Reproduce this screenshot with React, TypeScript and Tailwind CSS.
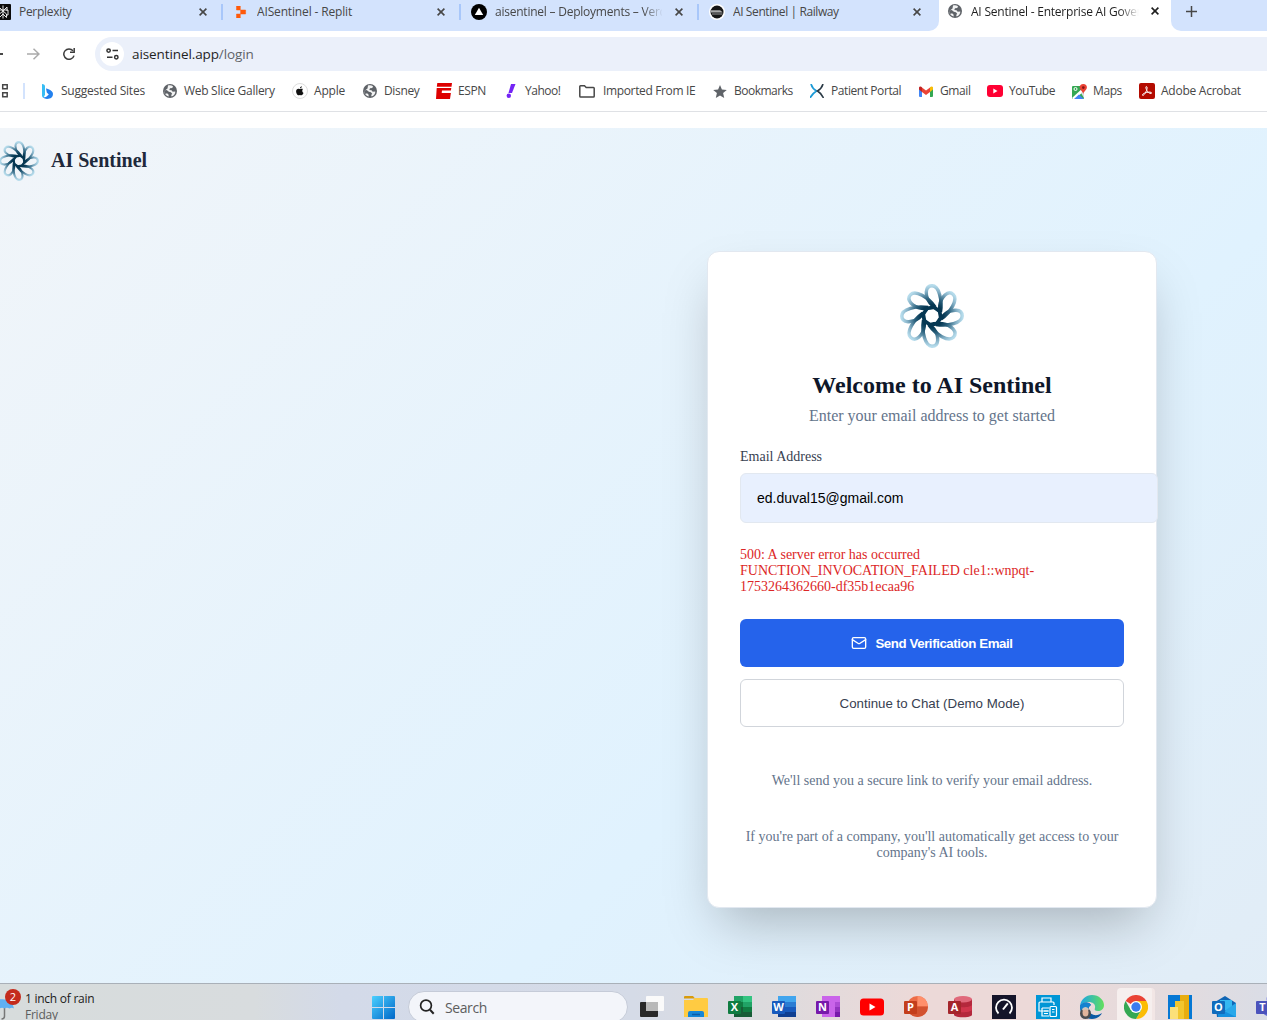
import React from "react";

type P = { children?: React.ReactNode };

function Petals({ id, size }: { id: string; size: number }) {
  const turns = [0, 45, 90, 135, 180, 225, 270, 315];
  return (
    <svg width={size} height={size} viewBox="-32 -32 64 64" className="block shrink-0">
      <defs>
        <radialGradient id={id} gradientUnits="userSpaceOnUse" cx="0" cy="0" r="32">
          <stop offset="0.35" stopColor="#053752" />
          <stop offset="0.55" stopColor="#2b617d" />
          <stop offset="0.78" stopColor="#84b0c6" />
          <stop offset="0.95" stopColor="#b5dbeb" />
        </radialGradient>
      </defs>
      <g fill="none" stroke={`url(#${id})`} strokeWidth="3.4">
        {turns.map((t) => (
          <path key={t} transform={`rotate(${t})`} d="M8.500-4C10.500-16 7-30.200 0-30.200C-7.500-30.200-7-19.500-2-13C1-9 5-6 8.500-4" />
        ))}
        <circle r="8.8" strokeWidth="3" />
      </g>
    </svg>
  );
}

function Globe({ s = 14 }: { s?: number }) {
  return (
    <svg width={s} height={s} viewBox="0 0 14 14" className="block">
      <circle cx="7" cy="7" r="7" fill="#5f6368" />
      <path d="M5 1.6c1.600-.5 3.700-.3 5 .6L9.300 4 7 4.300 6.300 6l2.200.3 1.200 1.400 2.600-.3c.2 2-1.300 4.300-3.700 5l-.4-1.500 1-1.200-1.300-1.500-2-.4L3.700 6 1.500 6.600c-.2 1 .3 2.600 1 3.500L4 9.300l1.500 1.200.2 1.900C3 12 1.300 9.600 1.300 7L4.500 4.500z" fill="#fff" opacity=".92" />
    </svg>
  );
}

function Close({ dark }: { dark?: boolean }) {
  return (
    <svg width="8" height="8" viewBox="0 0 8 8" className="block">
      <path d="M.6.6l6.800 6.800M7.400.6L.6 7.400" stroke={dark ? "#1f1f1f" : "#474747"} strokeWidth="1.6" />
    </svg>
  );
}

function Tab({ icon, title, cls, last }: { icon: React.ReactNode; title: string; cls: string; last?: boolean }) {
  return (
    <div className="flex h-6 w-[238px] shrink-0 items-center">
      <div className="flex w-4 shrink-0 justify-center">{icon}</div>
      <div className={"ml-2 w-[167px] shrink-0 overflow-hidden whitespace-nowrap text-[12px] leading-6 text-[#474747] " + cls}>{title}</div>
      <div className="ml-[13px] w-2"><Close /></div>
      {!last && <div className="ml-[14px] h-4 w-[2px] bg-[#a8c7fa]" />}
    </div>
  );
}

function Mark({ icon, w, cls, children }: P & { icon: React.ReactNode; w: string; cls: string }) {
  return (
    <div className={"flex shrink-0 items-center " + w}>
      <div className="flex w-4 shrink-0 justify-center">{icon}</div>
      <span className={"ml-[6px] whitespace-nowrap " + cls}>{children}</span>
    </div>
  );
}

function Office({ letter, tile, children }: P & { letter: string; tile: string }) {
  return (
    <svg width="24" height="24" viewBox="0 0 24 24" className="block shrink-0">
      {children}
      <rect x="0" y="6" width="13" height="13" rx="1" fill={tile} />
      <text x="6.500" y="16.300" textAnchor="middle" fontFamily="Open Sans, sans-serif" fontWeight="700" fontSize="11" fill="#fff">{letter}</text>
    </svg>
  );
}

function Slot({ children }: P) {
  return <div className="flex w-11 shrink-0 justify-center">{children}</div>;
}

function TabStrip() {
  return (
    <div className="flex h-[31px] w-[1267px] bg-white">
      <div className="flex h-[31px] w-[939px] shrink-0 overflow-hidden rounded-br-[10px] bg-[#d3e3fd]">
        <div className="-ml-[5px] flex h-6 shrink-0">
          <Tab cls="tracking-[-0.3px]" title="Perplexity" icon={
            <svg width="16" height="16" viewBox="0 0 16 16"><rect width="16" height="16" rx="1" fill="#0b0b0b" /><path d="M8 1.500v13M4 3l4 4 4-4v4M4 3v4M3 6h10v5h-1.500M3 6v5h1.500M8 7l-3.500 3v3.500L8 10M8 7l3.500 3v3.500L8 10" fill="none" stroke="#e6e6e6" strokeWidth="1" /></svg>} />
          <Tab cls="tracking-[-0.15px]" title="AISentinel - Replit" icon={
            <svg width="12" height="12" viewBox="0 0 12 12"><path d="M1.500 0h3.800v4H1.500zM5.600 4h5v4h-5zM1.500 8h3.800v4H1.500z" fill="#ff5a0a" stroke="#ff5a0a" strokeLinejoin="round" strokeWidth=".5" /></svg>} />
          <Tab cls="tracking-[-0.23px] [mask-image:linear-gradient(to_right,#000_148px,transparent_168px)]" title="aisentinel – Deployments – Vercel" icon={
            <svg width="16" height="16" viewBox="0 0 16 16"><circle cx="8" cy="8" r="8" fill="#000" /><path d="M8 3.800l4.200 7.200H3.800z" fill="#fff" /></svg>} />
          <Tab last cls="tracking-[-0.4px]" title="AI Sentinel | Railway" icon={
            <svg width="16" height="16" viewBox="0 0 16 16"><circle cx="8" cy="8" r="8" fill="#fff" /><circle cx="8" cy="8" r="6.500" fill="#161616" /><path d="M2 6.200h8.500c1.500.3 2.500 1.300 3 2.300H2z" fill="#aaa" /><path d="M3 10h10.500" stroke="#999" /></svg>} />
        </div>
      </div>
      <div className="flex w-[232px] shrink-0">
        <div className="ml-[9px] mt-1 h-[14px]"><Globe /></div>
        <div className="ml-[9px] h-6 w-[168px] overflow-hidden whitespace-nowrap text-[12px] leading-6 tracking-[-0.22px] text-[#1f1f1f] [mask-image:linear-gradient(to_right,#000_148px,transparent_168px)]">AI Sentinel - Enterprise AI Governance</div>
        <div className="ml-3 mt-[7px] h-2"><Close dark /></div>
      </div>
      <div className="h-[31px] flex-1 rounded-bl-[10px] bg-[#d3e3fd] pl-[15px] pt-[6px]">
        <svg width="11" height="11" viewBox="0 0 11 11"><path d="M5.500 0v11M0 5.500h11" stroke="#474747" strokeWidth="1.500" /></svg>
      </div>
    </div>
  );
}

function Toolbar() {
  return (
    <div className="flex h-[40px] pt-[6px]">
      <div className="flex h-[34px] w-[95px] shrink-0 items-center">
        <div className="h-[2px] w-[3px] bg-[#474747]" />
        <svg className="ml-6" width="13" height="12" viewBox="0 0 13 12"><path d="M0 6h11.500M6.500.7L12 6l-5.500 5.300" fill="none" stroke="#ababab" strokeWidth="1.500" /></svg>
        <svg className="ml-[23px]" width="12" height="12" viewBox="0 0 12 12"><path d="M11 7.600A5.200 5.200 0 1 1 10 2.800" fill="none" stroke="#3c3c3c" strokeWidth="1.500" /><path d="M11.200 0v4.200H7" fill="none" stroke="#3c3c3c" strokeWidth="1.500" /></svg>
      </div>
      <div className="flex h-[34px] flex-1 items-center rounded-l-full bg-[#ebf0fa] pl-[5px]">
        <div className="flex h-6 w-6 items-center justify-center rounded-full bg-white">
          <svg width="13" height="12" viewBox="0 0 13 12"><g fill="none" stroke="#333" strokeWidth="1.500"><circle cx="2.600" cy="2.600" r="1.700" /><path d="M6.500 2.600h5.500M1 9.300h5.500" /><circle cx="10.300" cy="9.300" r="1.700" /></g></svg>
        </div>
        <span className="ml-2 text-[13.500px] tracking-[-0.1px] text-[#1f1f1f]">aisentinel.app<span className="text-[#5f6368]">/login</span></span>
      </div>
    </div>
  );
}

function Bookmarks() {
  return (
    <div className="flex h-[41px] items-center border-b border-[#dfe1e5] text-[12px] leading-4 text-[#474747]">
      <svg width="8" height="14" viewBox="0 0 8 14" className="shrink-0"><path d="M2.700.8h4.500v4H2.700zM2.700 8.800h4.500v4H2.700z" fill="none" stroke="#474747" strokeWidth="1.500" /></svg>
      <div className="ml-[15px] mr-[14px] h-4 w-[2px] shrink-0 bg-[#d3e3fd]" />
      <Mark w="w-[123px]" cls="tracking-[-0.22px]" icon={<svg width="11" height="15" viewBox="0 0 11 15"><path d="M0 0q3 .3 3 2.500v8L1.500 14Q0 13 0 11.500z" fill="#37bdf4" /><path d="M4 4.500q.8-.3 2 .4 5 2 5 5 0 4-4.500 4.900Q3 15.300 1 13.600q3.500-.2 5.800-3.200L4.800 8.500z" fill="#2381ee" /></svg>}>Suggested Sites</Mark>
      <Mark w="w-[130px]" cls="tracking-[-0.29px]" icon={<Globe />}>Web Slice Gallery</Mark>
      <Mark w="w-[70px]" cls="tracking-[-0.2px]" icon={<svg width="16" height="16" viewBox="0 0 16 16"><circle cx="8" cy="8" r="7.500" fill="#fff" stroke="#ddd" /><path d="M10.900 6.100c-.7-.4-1.500-.5-2.400 0-.3.100-.6.100-.9 0-1.800-.9-3.500.3-3.500 2.300 0 1.600 1.200 3.900 2.300 3.900.6 0 .8-.3 1.500-.3s.9.300 1.500.3c.9 0 1.700-1.300 2.100-2.300-1.300-.6-1.700-2.700-.6-3.900zM8 5.300c0-1.100.8-2 1.800-2.100C9.900 4.300 9 5.300 8 5.300z" fill="#111" /></svg>}>Apple</Mark>
      <Mark w="w-[74px]" cls="tracking-[-0.35px]" icon={<Globe />}>Disney</Mark>
      <Mark w="w-[67px]" cls="tracking-[-0.4px]" icon={<svg width="16" height="16" viewBox="0 0 16 16"><path d="M1.300 0H16l-.5 3.800H.8zM.7 4.900h14.600l-.4 2.600H6L5.700 10h9.200L14 16H0z" fill="#d00" /></svg>}>ESPN</Mark>
      <Mark w="w-[78px]" cls="tracking-[-0.5px]" icon={<svg width="10" height="14" viewBox="0 0 10 14"><path d="M5 0h4.500L6 9H2.500z" fill="#7424f5" /><circle cx="2.800" cy="11.800" r="2.200" fill="#7424f5" /></svg>}>Yahoo!</Mark>
      <Mark w="w-[131px]" cls="tracking-[-0.36px]" icon={<svg width="16" height="13" viewBox="0 0 16 13" className="-ml-1 shrink-0"><path d="M.8 1.500q0-.7.700-.7h4L7.200 2.500h7.200q.8 0 .8.800v8q0 .8-.8.800H1.600q-.8 0-.8-.8z" fill="none" stroke="#474747" strokeWidth="1.500" /></svg>}>Imported From IE</Mark>
      <Mark w="w-[97px]" cls="tracking-[-0.5px]" icon={<svg width="14" height="13" viewBox="0 0 14 13"><path d="M7 0l1.900 4.500 4.900.4-3.700 3.200 1.100 4.800L7 10.400l-4.200 2.500 1.100-4.800L.2 4.900l4.900-.4z" fill="#5f6368" /></svg>}>Bookmarks</Mark>
      <Mark w="w-[109px]" cls="tracking-[-0.42px]" icon={<svg width="14" height="14" viewBox="0 0 14 14"><path d="M1 0c1 3.500 3 5.500 5.500 7C4 8.500 2 10.500 0 14" fill="none" stroke="#1c9ad6" strokeWidth="1.700" /><path d="M13 0C12 3.500 10 5.500 7.500 7 10 8.500 12 10.500 13.500 14" fill="none" stroke="#2b3a46" strokeWidth="1.600" /></svg>}>Patient Portal</Mark>
      <Mark w="w-[69px]" cls="tracking-[-0.4px]" icon={<svg width="14" height="11" viewBox="0 0 14 11"><path d="M0 1.500h3V11H1q-1 0-1-1z" fill="#4285f4" /><path d="M11 1.500h3V10q0 1-1 1h-2z" fill="#34a853" /><path d="M11 1.500C12 0 14 .3 14 2v1.500L11 6z" fill="#fbbc04" /><path d="M0 2C0 .3 2 0 3 1.500V6L0 3.500z" fill="#c5221f" /><path d="M3 1.500l4 3 4-3V6L7 9 3 6z" fill="#ea4335" /></svg>}>Gmail</Mark>
      <Mark w="w-[84px]" cls="tracking-[-0.48px]" icon={<svg width="16" height="12" viewBox="0 0 16 12"><rect width="16" height="12" rx="3" fill="#f03" /><path d="M6.300 3.500v5l4.200-2.500z" fill="#fff" /></svg>}>YouTube</Mark>
      <Mark w="w-[68px]" cls="tracking-[-0.4px]" icon={<svg width="15" height="15" viewBox="0 0 15 15"><path d="M0 3q0-1 1-1h11v12q0 1-1 1H1q-1 0-1-1z" fill="#34a853" /><path d="M0 14L12 3v4L3 15H1z" fill="#fff" /><path d="M2 15l5-4.500L12 15z" fill="#4285f4" /><path d="M9 9l3-2v7z" fill="#dadce0" /><circle cx="3.500" cy="5" r="1.500" fill="none" stroke="#fff" /><path d="M11.300 0a3.600 3.600 0 0 1 3.600 3.600c0 2.400-2.800 3.400-3.600 6.400-.8-3-3.600-4-3.600-6.400A3.600 3.600 0 0 1 11.300 0z" fill="#ea4335" /><circle cx="11.300" cy="3.600" r="1.300" fill="#811411" /></svg>}>Maps</Mark>
      <Mark w="w-[110px]" cls="tracking-[-0.25px]" icon={<svg width="16" height="16" viewBox="0 0 16 16"><rect width="16" height="16" rx="2" fill="#b30b00" /><path d="M7.300 3.600c1.600 0 .6 3.600-.6 5.700s-2.600 3.700-3.200 3 1-2.100 3.800-2.800 5.300-.5 5.300.5-2.500.6-4-1.400-2.300-5-1.300-5z" fill="none" stroke="#fff" strokeWidth="1" /></svg>}>Adobe Acrobat</Mark>
    </div>
  );
}

function LoginPage() {
  return (
    <div className="h-[855px] w-[1864px] bg-[linear-gradient(135deg,#f1f5f9_0%,#e0f2fe_50%,#e2e8f0_100%)] pt-[13px] [font-family:'Liberation_Serif',serif]">
      <div className="-ml-[1px] flex h-10 items-center">
        <Petals id="markSmall" size={40} />
        <span className="ml-3 pb-px text-[20px] font-bold leading-[23px] text-[#1e293b]">AI Sentinel</span>
      </div>
      <div className="ml-[707px] mt-[70px] h-[657px] w-[450px] rounded-xl border border-[#e2e8f0] bg-white px-8 pt-8 shadow-[0_25px_50px_-12px_rgba(0,0,0,0.25)]">
        <div className="flex justify-center"><Petals id="markLarge" size={64} /></div>
        <h1 className="mt-[23px] text-center text-[24px] font-bold leading-7 text-[#0f172a]">Welcome to AI Sentinel</h1>
        <p className="mt-2 text-center text-[16px] leading-[18px] text-[#64748b]">Enter your email address to get started</p>
        <label className="mt-6 block text-[14px] leading-4 text-[#374151]">Email Address</label>
        <div className="mt-2 flex h-[50px] w-[418px] items-center rounded-md border border-[#e2e8f0] bg-[#e8f0fe] px-4 text-[14px] text-black [font-family:'Liberation_Sans',sans-serif]">ed.duval15@gmail.com</div>
        <p className="mt-6 text-[14px] leading-4 text-[#dc2626]">500: A server error has occurred<br />FUNCTION_INVOCATION_FAILED cle1::wnpqt-<br />1753264362660-df35b1ecaa96</p>
        <button className="mt-6 flex h-12 w-full items-center justify-center gap-2 rounded-md bg-[#2563eb] text-[13.300px] font-bold tracking-[-0.43px] text-white [font-family:'Liberation_Sans',sans-serif]">
          <svg width="16" height="16" viewBox="0 0 24 24" fill="none" stroke="#fff" strokeWidth="2" strokeLinecap="round" strokeLinejoin="round"><rect x="2" y="4" width="20" height="16" rx="2" /><path d="m22 7-8.970 5.700a1.940 1.940 0 0 1-2.060 0L2 7" /></svg>
          <span className="pt-[2px]">Send Verification Email</span>
        </button>
        <button className="mt-3 flex h-12 w-full items-center justify-center rounded-md border border-[#d1d5db] bg-white pt-[2px] text-[13.300px] text-[#374151] [font-family:'Liberation_Sans',sans-serif]">Continue to Chat (Demo Mode)</button>
        <p className="mt-[46px] text-center text-[14px] leading-4 text-[#64748b]">We'll send you a secure link to verify your email address.</p>
        <p className="mt-10 text-center text-[14px] leading-4 text-[#64748b]">If you're part of a company, you'll automatically get access to your<br />company's AI tools.</p>
      </div>
    </div>
  );
}

function Taskbar() {
  return (
    <div className="flex h-[37px] w-[1267px] overflow-hidden border-t border-[#a9b0b8] bg-[linear-gradient(to_right,#d7dcdc_0%,#d8dcde_20%,#d3dae9_27%,#d5dbe7_50%,#dcdbde_60%,#ecd9d8_72%,#ecd9d8_82%,#e4dbdd_92%,#dadde6_100%)]">
      <div className="flex w-[361px] shrink-0">
        <div className="relative h-9 w-[25px] shrink-0">
          <svg width="25" height="36" viewBox="0 0 25 36" className="block">
            <path d="M4.500 22v10q0 3-3 3" fill="none" stroke="#777" strokeWidth="1.500" />
            <path d="M-9 24.500C-7 12 12 12 14 24.500q-2-1.500-4.500 0-2.500-1.500-5 0-2.500-1.500-5 0z" fill="#5fb0f3" />
          </svg>
          <div className="absolute left-[5px] top-[5px] flex h-4 w-4 items-center justify-center rounded-full bg-[#c42b1c] text-[11px] leading-4 text-white">2</div>
        </div>
        <div className="pt-[7px] text-[12px] leading-4 tracking-[-0.25px] text-[#1b1b1b]">1 inch of rain<br /><span className="text-[#5c5c5c]">Friday</span></div>
      </div>
      <div className="flex h-[46px] w-[960px] shrink-0 items-center">
        <Slot>
          <svg width="23" height="23" viewBox="0 0 23 23"><defs><linearGradient id="win" x1="0" y1="0" x2="1" y2="1"><stop offset="0" stopColor="#4cd0ff" /><stop offset="1" stopColor="#0067c8" /></linearGradient></defs><path d="M1 0h10v11H0V1q0-1 1-1zM12 0h10q1 0 1 1v10H12zM0 12h11v11H1q-1 0-1-1zM12 12h11v10q0 1-1 1H12z" fill="url(#win)" /></svg>
        </Slot>
        <div className="ml-[3px] mr-[2px] flex h-8 w-[220px] shrink-0 items-center rounded-full border border-[#c5cbd8] bg-[#f3f5fa] pl-[10px]">
          <svg width="16" height="16" viewBox="0 0 16 16"><circle cx="7" cy="6.500" r="5.400" fill="none" stroke="#222" strokeWidth="1.700" /><path d="M11 10.800l3.700 3.900" stroke="#222" strokeWidth="2" /></svg>
          <span className="ml-[10px] text-[14px] tracking-[-0.4px] text-[#5d5d5d]">Search</span>
        </div>
        <Slot><svg width="24" height="24" viewBox="0 0 24 24"><rect x="0" y="7" width="18" height="15" rx="1" fill="#292929" /><rect x="6" y="1" width="18" height="15" rx="1" fill="#fafafa" /><rect x="6" y="7" width="12" height="9" fill="#b9b9b9" /></svg></Slot>
        <Slot><svg width="24" height="24" viewBox="0 0 24 24"><path d="M0 2q0-1 1-1h8l2 2.500H0z" fill="#d89b0b" /><path d="M0 5h9l2-2h12q1 0 1 1v18H0z" fill="#ffcb42" /><path d="M4 22v-4q0-2 2-2h12q2 0 2 2v4z" fill="#1686d6" /><path d="M8 19.500h8" stroke="#0b5ba6" strokeWidth="1.500" /></svg></Slot>
        <Slot><Office letter="X" tile="#107c41"><path d="M6 1h9v6H6z" fill="#21a366" /><path d="M15 1h9v6h-9z" fill="#33c481" /><path d="M6 7h9v5H6z" fill="#107c41" /><path d="M15 7h9v5h-9z" fill="#21a366" /><path d="M15 12h9v5h-9z" fill="#107c41" /><path d="M6 12h9v5h9v5H6z" fill="#185c37" /></Office></Slot>
        <Slot><Office letter="W" tile="#185abd"><path d="M6 1h18v6H6z" fill="#41a5ee" /><path d="M6 7h18v5H6z" fill="#2b7cd3" /><path d="M6 12h18v5H6z" fill="#185abd" /><path d="M6 17h18v5H6z" fill="#103f91" /></Office></Slot>
        <Slot><Office letter="N" tile="#7719aa"><path d="M6 1h18v21H6z" fill="#ca64ea" /><path d="M19 7h5v5h-5z" fill="#ae4bd5" /><path d="M19 12h5v5h-5z" fill="#9332bf" /><path d="M19 17h5v5h-5z" fill="#7719aa" /></Office></Slot>
        <Slot><svg width="24" height="24" viewBox="0 0 24 24"><rect y="3.500" width="24" height="17" rx="3.500" fill="#f00" /><path d="M9.500 8.500v7l6-3.500z" fill="#fff" /></svg></Slot>
        <Slot><Office letter="P" tile="#c43e1c"><circle cx="13.500" cy="11.500" r="10.500" fill="#ed6c47" /><path d="M13.500 1A10.500 10.500 0 0 1 24 11.500H13.500z" fill="#ff8f6b" /><path d="M24 11.500a10.500 10.500 0 0 1-21 0z" fill="#d35230" /></Office></Slot>
        <Slot><Office letter="A" tile="#a4262c"><path d="M6 4v16c1 3 17 3 18 0V4z" fill="#b4283c" /><path d="M6 10c2 3 16 3 18 0v5c-2 3-16 3-18 0z" fill="#d0354c" /><ellipse cx="15" cy="4.200" rx="9" ry="3.200" fill="#e0697b" /></Office></Slot>
        <Slot><svg width="24" height="24" viewBox="0 0 24 24"><path d="M0 0h24v24H0z" fill="#15152a" /><path d="M6.500 18.500a8 8 0 1 1 11 0" fill="none" stroke="#fff" strokeWidth="1.800" /><path d="M11 14.500l4.800-6.200" stroke="#fff" strokeWidth="2" /></svg></Slot>
        <Slot><svg width="24" height="24" viewBox="0 0 24 24"><path d="M0 0h24v24H0z" fill="#0096d6" /><g fill="none" stroke="#fff" strokeWidth="1.200"><path d="M6 7V3h9v4M13 16H3V8q0-1 1-1h13q1 0 1 1v2M6 13h7M6 13v8h7" /><path d="M8 16h4M8 18.500h4" /><rect x="14" y="11.500" width="6.500" height="10" rx="1" /><path d="M16 14.500h2.500M16 17h2.500" /></g></svg></Slot>
        <Slot><svg width="24" height="24" viewBox="0 0 24 24"><defs><linearGradient id="edge"><stop offset="0" stopColor="#1ba4e8" /><stop offset="1" stopColor="#63df5c" /></linearGradient></defs><path d="M0 11C1 4 6 0 12 0c7 0 12 5 12 10 0 4-3 6-6 6s-4-1-3-3c1-4-3-6-6-6-4 0-7 1-9 4z" fill="url(#edge)" /><path d="M0 11c2-4 9-5 11-1-4 2-3 9 3 10 3 .5 6-.5 8-2-2 4-6 6-10 6C5 24 0 19 0 11z" fill="#0c59a4" /><path d="M0 11c2-4 9-5 11-1-3 2-4 6-2 9l-3 3C2 20 0 16 0 11z" fill="#1482d0" /><circle cx="5.500" cy="18.500" r="5.500" fill="#4b4c50" /><ellipse cx="5.500" cy="17.500" rx="3" ry="4" fill="#e2b49c" /><path d="M2 14q3.500-4 7 0l-1 1.500q-2-2-5.500 0z" fill="#cfc6bd" /></svg></Slot>
        <div className="flex w-11 shrink-0 items-center justify-center">
          <div className="flex h-[38px] w-[38px] shrink-0 items-center justify-center rounded border-r-[3px] border-[#f2e6e5] bg-[#f6efee] pl-[2px]">
            <svg width="24" height="24" viewBox="0 0 24 24" className="shrink-0"><path d="M12 12L1.600 6A12 12 0 0 1 22.400 6z" fill="#ea4335" /><path d="M12 12V6h10.400A12 12 0 0 1 12 24l5.200-9z" fill="#fbbc04" /><path d="M12 12l5.200 3L12 24A12 12 0 0 1 1.600 6l5.200 9z" fill="#34a853" /><circle cx="12" cy="12" r="6" fill="#fff" /><circle cx="12" cy="12" r="4.700" fill="#3b7cf0" /></svg>
          </div>
        </div>
        <Slot><svg width="24" height="24" viewBox="0 0 24 24"><path d="M0 0h24v24H0z" fill="#0678d4" /><path d="M12 0h9v24h-9z" fill="#e8ad10" /><path d="M7 6h9v18H7z" fill="#f2c62e" /><path d="M2 12h8v12H2z" fill="#fbe07a" /></svg></Slot>
        <Slot><Office letter="O" tile="#0f6cbd"><path d="M3 7l10-6 11 7v13q0 1-1 1H5z" fill="#1066b5" /><path d="M8 5h12v10H8z" fill="#35b8f1" /><path d="M24 8L8 19v3h15q1 0 1-1z" fill="#29a8ea" /><path d="M6 13l18 9H6z" fill="#1490df" /></Office></Slot>
        <Slot><Office letter="T" tile="#4b53bc"><circle cx="14" cy="4" r="3.500" fill="#7b83eb" /><path d="M7 8h15v10q-3 5-8 4-5-1-7-4z" fill="#5f68d3" /></Office></Slot>
      </div>
    </div>
  );
}

export default function App() {
  return (
    <div className="h-[1020px] w-[1267px] overflow-hidden bg-white [font-family:'Open_Sans',sans-serif]">
      <TabStrip />
      <Toolbar />
      <Bookmarks />
      <div className="h-4" />
      <div className="h-[855px] w-full overflow-hidden"><LoginPage /></div>
      <Taskbar />
    </div>
  );
}
